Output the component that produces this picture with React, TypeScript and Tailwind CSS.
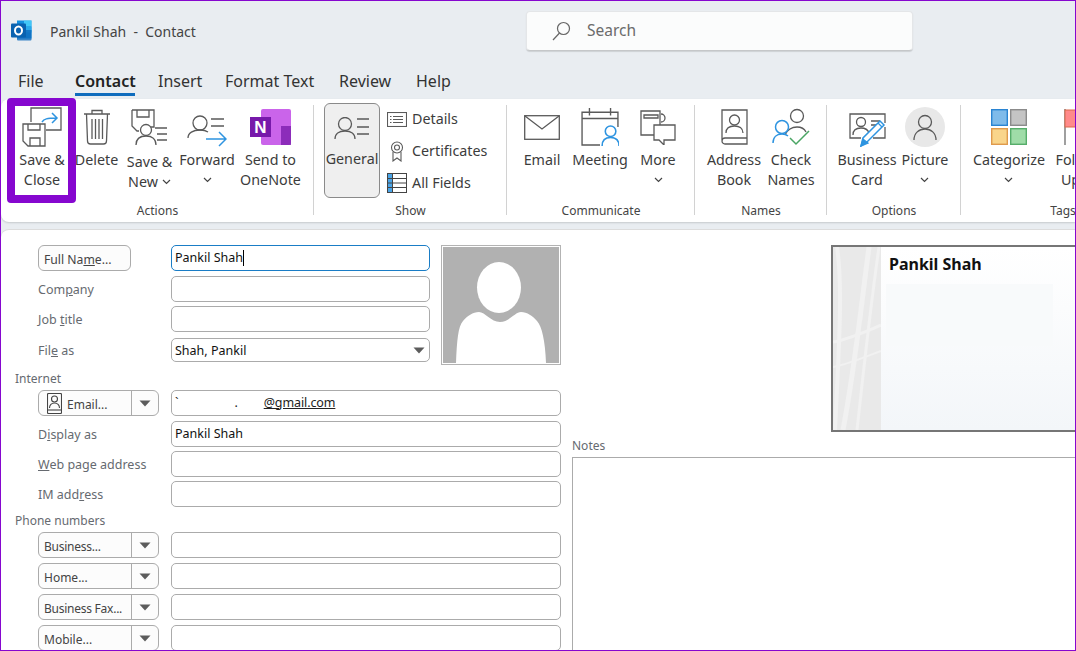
import React from "react";

const S = "#5a5a5a";
const B = "#2e94e0";

const Chev = ({ className = "" }: { className?: string }) => (
  <svg width="9" height="6" viewBox="0 0 9 6" className={className}>
    <path d="M1 1l3.5 3.5L8 1" fill="none" stroke="#444" strokeWidth="1.2" />
  </svg>
);

const Tri = () => (
  <svg width="12" height="7" viewBox="0 0 12 7"><path d="M0.5 0.5h11L6 6.5z" fill="#5c5c5c" /></svg>
);

const Logo = () => (
  <svg width="21" height="21" viewBox="0 0 21 21">
    <rect x="6" y="0.500" width="14.500" height="18" fill="#1490df" />
    <rect x="13" y="0.500" width="7.500" height="6" fill="#50d9ff" opacity="0.75" />
    <rect x="13" y="6.500" width="7.500" height="6" fill="#28a8ea" />
    <path d="M6 10h14.500v9.500a1 1 0 0 1-1 1H7a1 1 0 0 1-1-1z" fill="#0f6cbd" opacity="0.8" />
    <rect x="0" y="3.500" width="15" height="14" rx="1" fill="#0a62b0" />
    <ellipse cx="7.500" cy="10.500" rx="3.500" ry="4" fill="none" stroke="#fff" strokeWidth="2" />
  </svg>
);

const SaveClose = () => (
  <svg width="40" height="40" viewBox="0 0 40 40" fill="none" strokeWidth="1.3">
    <path d="M9 15V1h30v22H24" stroke={S} />
    <path d="M20 15c2-3 5-4 14-4M30 6l5 5-5 5" stroke={B} strokeWidth="1.5" />
    <path d="M1 17h22v22H6l-5-5z" stroke={S} fill="#fff" />
    <path d="M6 17v6h12v-6M8 39v-8h10v8" stroke={S} />
  </svg>
);

const Trash = () => (
  <svg width="28" height="36" viewBox="0 0 28 36" fill="none" stroke={S} strokeWidth="1.3">
    <path d="M1 5h26M9 5V1.500h10V5M3.500 5l1 27a3 3 0 0 0 3 3h13a3 3 0 0 0 3-3l1-27" />
    <path d="M9 10v20M12.500 10v20M16 10v20M19.500 10v20" />
  </svg>
);

const SaveNew = () => (
  <svg width="37" height="37" viewBox="0 0 37 37" fill="none" stroke={S} strokeWidth="1.3">
    <path d="M1 1h22v17h-5M1 1v16l5 5h2" />
    <path d="M6 1v7h12V1" />
    <circle cx="15" cy="21" r="5.500" fill="#fff" />
    <path d="M5 36c0-6 4-9 10-9s10 3 10 9" />
    <path d="M24 19h12M26 25h10M26 31h10" />
  </svg>
);

const Forward = () => (
  <svg width="40" height="33" viewBox="0 0 40 33" fill="none" strokeWidth="1.3" className="mt-[8px]">
    <g stroke={S}>
      <circle cx="13" cy="8" r="7" />
      <path d="M1 23c0-5 5-8 12-8 3 0 6 .6 8 2" />
      <path d="M24 4h13M24 11h13" />
    </g>
    <path d="M19 24h19M32 17l7 7-7 7" stroke={B} strokeWidth="1.5" />
  </svg>
);

const OneNote = () => (
  <svg width="41" height="37" viewBox="0 0 41 37">
    <rect x="11" y="0" width="30" height="36" rx="2" fill="#ca64ea" />
    <rect x="31" y="17" width="10" height="19" fill="#7719aa" opacity="0.75" />
    <rect x="0" y="8" width="21" height="20" fill="#7719aa" />
    <text x="10.500" y="24" textAnchor="middle" fontFamily="'Liberation Sans',sans-serif" fontWeight="700" fontSize="17" fill="#fff">N</text>
  </svg>
);

const General = () => (
  <svg width="36" height="22" viewBox="0 0 36 22" fill="none" stroke={S} strokeWidth="1.3">
    <circle cx="11" cy="7" r="6.500" />
    <path d="M1 22c0-5 4-8 10-8s10 3 10 8" />
    <path d="M23 2h12M23 10h12M23 17h12" />
  </svg>
);

const Details = () => (
  <svg width="20" height="15" viewBox="0 0 20 15" fill="none" stroke={S} strokeWidth="1.100">
    <rect x="0.500" y="0.500" width="19" height="14" />
    <path d="M3 4.500h1.500M6 4.500h10M3 7.500h1.500M6 7.500h10M3 10.500h1.500M6 10.500h10" />
  </svg>
);

const Cert = () => (
  <svg width="14" height="21" viewBox="0 0 14 21" fill="none" stroke={S} strokeWidth="1.100">
    <circle cx="7" cy="6.500" r="5.500" />
    <circle cx="7" cy="6.500" r="2.500" />
    <path d="M3 11v9l4-3 4 3v-9" />
  </svg>
);

const AllFields = () => (
  <svg width="20" height="20" viewBox="0 0 20 20">
    <rect x="0.500" y="0.500" width="19" height="19" fill="#fff" stroke="#444" />
    <rect x="1" y="1" width="4.500" height="18" fill="#4aa5e8" />
    <path d="M1 5.500h18M1 10h18M1 14.500h18M5.500 1v18" stroke="#444" fill="none" />
  </svg>
);

const Mail = () => (
  <svg width="36" height="25" viewBox="0 0 36 25" fill="none" stroke={S} strokeWidth="1.3">
    <rect x="0.700" y="0.700" width="34.600" height="23.600" />
    <path d="M1 1l17 13L35 1" />
  </svg>
);

const Meeting = () => (
  <svg width="38" height="38" viewBox="0 0 36 36" fill="none" strokeWidth="1.3">
    <g stroke={S}>
      <path d="M18 35H1V4h34v14M1 10h34M8 0v7M28 0v7" />
    </g>
    <circle cx="28" cy="22" r="5" stroke={B} fill="#fff" strokeWidth="1.500" />
    <path d="M20 36c0-5 3-8 8-8s8 3 8 8" stroke={B} strokeWidth="1.500" />
  </svg>
);

const More = () => (
  <svg width="36" height="35" viewBox="0 0 36 35" fill="none" stroke={S} strokeWidth="1.3">
    <path d="M14 25H1V1h19v14" />
    <path d="M4 5h14v3H4z" />
    <path d="M21 4a3 3 0 0 1 0 8" />
    <path d="M14 15h21v15h-11v5l-5-5h-5z" fill="#fff" />
  </svg>
);

const AddressBook = () => (
  <svg width="27" height="36" viewBox="0 0 27 36" fill="none" stroke={S} strokeWidth="1.3">
    <path d="M1 31V1h25v34H4a3 3 0 0 1-3-3 3 3 0 0 1 3-3h22" />
    <circle cx="13.500" cy="11" r="5" />
    <path d="M5 24c0-5 4-7 8.500-7S22 19 22 24" />
  </svg>
);

const CheckNames = () => (
  <svg width="38" height="38" viewBox="0 0 38 38" fill="none" strokeWidth="1.3">
    <g stroke={S}>
      <circle cx="25" cy="8" r="6.500" />
      <path d="M13 27c2-5 7-8 12-8 4 0 7 1 9 5" />
    </g>
    <circle cx="10" cy="19" r="6.500" stroke={B} fill="#fff" strokeWidth="1.500" />
    <path d="M1 35c0-6 4-9 9-9 3 0 5 1 6 2" stroke={B} strokeWidth="1.500" />
    <path d="M18 30l6 6 13-13" stroke="#4aa564" strokeWidth="1.500" />
  </svg>
);

const BizCard = () => (
  <svg width="38" height="34" viewBox="0 0 38 34" fill="none" strokeWidth="1.3" className="mt-[6px] ml-[2px]">
    <path d="M12 25H1V1h35v9M36 14v11H24" stroke={S} />
    <g stroke={S}>
      <circle cx="12" cy="9" r="4.500" />
      <path d="M4 22c0-5 3-7 8-7 4 0 7 2 8 5" />
      <path d="M22 8h9M22 12h5" />
    </g>
    <path d="M12 33l2-8L31 8l4 4-17 17z" stroke={B} fill="#fff" strokeWidth="1.500" />
    <path d="M12 33l2-7 5 4z" fill={B} stroke={B} />
    <path d="M29 10l4 4" stroke={B} />
  </svg>
);

const Picture = () => (
  <svg width="40" height="40" viewBox="0 0 40 40">
    <circle cx="20" cy="20" r="20" fill="#e8e8e8" />
    <g fill="none" stroke={S} strokeWidth="1.3">
      <circle cx="20" cy="15" r="6.500" />
      <path d="M9 33c0-7 5-11 11-11s11 4 11 11" />
    </g>
  </svg>
);

const Categorize = () => (
  <svg width="36" height="36" viewBox="0 0 36 36" strokeWidth="1.400">
    <rect x="0.700" y="0.700" width="15.600" height="15.600" fill="#7fbbea" stroke="#2a84d2" />
    <rect x="19.700" y="0.700" width="15.600" height="15.600" fill="#c4c4c4" stroke="#8b8b8b" />
    <rect x="0.700" y="19.700" width="15.600" height="15.600" fill="#f9d58b" stroke="#df9a4d" />
    <rect x="19.700" y="19.700" width="15.600" height="15.600" fill="#9fdca8" stroke="#56ad6a" />
  </svg>
);

const Flag = () => (
  <svg width="26" height="36" viewBox="0 0 26 36">
    <path d="M1 0v36" stroke="#777" strokeWidth="1.400" />
    <rect x="1" y="1" width="30" height="17" fill="#ff8a8a" stroke="#d9694a" />
  </svg>
);

const RB = ({ w, icon, lines, chev, low }: { w: number; icon: React.ReactNode; lines: React.ReactNode[]; chev?: "own" | "inline"; low?: boolean }) => (
  <div className="flex flex-col items-center shrink-0" style={{ width: w }}>
    <div className="h-[44px] flex items-center justify-center">{icon}</div>
    <div className={`flex flex-col items-center text-[14.300px] leading-[20px] text-[#3c3c3c] whitespace-nowrap ${low ? "mt-[3px]" : "mt-[1px]"}`}>
      {lines.map((l, i) => (
        <div key={i} className="flex items-center gap-[4px]">
          {l}
          {chev === "inline" && i === lines.length - 1 && <Chev />}
        </div>
      ))}
      {chev === "own" && <div className="h-[20px] flex items-center"><Chev /></div>}
    </div>
  </div>
);

const Group = ({ width, label, pl, children, last }: { width: number; label: string; pl: number; children: React.ReactNode; last?: boolean }) => (
  <div className="relative shrink-0 flex flex-col h-[116px] mt-[6px]" style={{ width }}>
    <div className="flex flex-1" style={{ paddingLeft: pl }}>{children}</div>
    <div className="text-[12px] leading-[16px] text-center text-[#444] mb-[2px]">{label}</div>
    {!last && <div className="absolute right-0 top-0 bottom-[6px] w-[1px] bg-[#d2d2d2]" />}
  </div>
);

const field = "h-[26px] border border-[#ababab] rounded-[5px] bg-white flex items-center px-[3px] text-[12.500px] text-[#111] shrink-0";

const Label = ({ children }: { children: React.ReactNode }) => (
  <div className="w-[133px] shrink-0 pt-[2px] text-[12.500px] text-[#666a70] whitespace-nowrap">{children}</div>
);

const SplitBtn = ({ children }: { children: React.ReactNode }) => (
  <div className="h-[26px] w-[121px] mr-[12px] shrink-0 border border-[#ababab] rounded-[6px] bg-[#fcfcfc] flex items-stretch text-[12px] text-[#444]">
    <div className="flex-1 flex items-center pl-[5px] border-r border-[#ababab] whitespace-nowrap overflow-hidden">{children}</div>
    <div className="w-[26px] flex items-center justify-center"><Tri /></div>
  </div>
);

const ContactIco = () => (
  <svg width="15" height="21" viewBox="0 0 15 21" className="ml-[3px] mr-[5px]" fill="none" stroke="#444" strokeWidth="1.100">
    <rect x="0.500" y="0.500" width="14" height="20" rx="1" />
    <path d="M0.500 17h14" />
    <circle cx="7.500" cy="6" r="3" />
    <path d="M2.500 15c0-3 2-5 5-5s5 2 5 5" />
  </svg>
);

const Photo = () => (
  <svg width="120" height="120" viewBox="0 0 120 120">
    <rect x="0.500" y="0.500" width="119" height="119" fill="#fff" stroke="#b3b3b3" />
    <rect x="2" y="2" width="116" height="116" fill="#b1b1b1" />
    <path d="M15 118C16 95 17 82 22 76C26 71 32 67 38 67C44 67 50 77 59 77C68 77 74 67 80 67C86 67 92 71 96 76C101 82 104 95 105 118Z" fill="#fff" />
    <ellipse cx="58" cy="42.500" rx="22" ry="25.500" fill="#fff" />
  </svg>
);

const Stripe = () => (
  <svg width="48" height="183" viewBox="0 0 48 183" className="shrink-0 block">
    <rect width="48" height="183" fill="#e9e9e9" />
    <g fill="none" stroke="#f1f1f1">
      <path d="M36 0C28 60 22 120 10 183" strokeWidth="5" />
      <path d="M46 0C36 70 30 130 24 183" strokeWidth="3" />
      <path d="M0 95c16-3 32-10 48-17" strokeWidth="3" />
      <path d="M0 120c16-3 32-10 48-16" strokeWidth="2" />
      <path d="M4 0C10 40 6 100 2 183" strokeWidth="4" />
    </g>
  </svg>
);

const Row = ({ mt, children }: { mt: string; children: React.ReactNode }) => (
  <div className={`flex items-center ${mt}`}>{children}</div>
);

const BtnText = ({ children, tight }: { children: React.ReactNode; tight?: boolean }) => (
  <span className={`pt-[4px] ${tight ? "tracking-[-0.25px]" : ""}`}>{children}</span>
);

export default function App() {
  return (
    <div className="w-[1076px] h-[651px] overflow-hidden border border-[#8607cf] bg-[#e9edf1] relative font-['Noto_Sans','Open_Sans',sans-serif] text-[#333]">
      {/* Title bar */}
      <div className="h-[60px] flex items-start relative">
        <div className="mt-[19px] ml-[10px]"><Logo /></div>
        <div className="mt-[21px] ml-[18px] text-[14px] leading-[20px] text-[#444] whitespace-pre">Pankil Shah  -  Contact</div>
        <div className="absolute left-[525px] top-[10px] w-[387px] h-[40px] bg-[#fbfcfc] rounded-[4px] border border-[#e4e6e8] border-b-[#c5c7c9] flex items-center shadow-[0_1px_1px_rgba(0,0,0,0.12)]">
          <svg width="19" height="20" viewBox="0 0 19 20" className="ml-[25px]" fill="none" stroke="#666" strokeWidth="1.200">
            <circle cx="11.500" cy="7.500" r="6" />
            <path d="M7.500 12L1 19" />
          </svg>
          <span className="ml-[16px] text-[15.500px] text-[#6b6b6b]">Search</span>
        </div>
      </div>
      {/* Tabs */}
      <div className="h-[38px] flex items-start text-[16px] leading-[40px] text-[#333] pl-[17px]">
        <div className="w-[57px]">File</div>
        <div className="w-[83px] font-semibold text-[#222] relative">
          Contact
          <div className="absolute left-0 top-[32px] w-[60px] h-[3px] bg-[#0f6cbd]" />
        </div>
        <div className="w-[67px]">Insert</div>
        <div className="w-[114px]">Format Text</div>
        <div className="w-[77px]">Review</div>
        <div>Help</div>
      </div>
      {/* Ribbon */}
      <div className="h-[123px] bg-white rounded-[8px] rounded-r-none flex shadow-[0_1px_2px_rgba(0,0,0,0.15)] overflow-hidden">
        <Group width={313} label="Actions" pl={7}>
          <RB w={68} icon={<SaveClose />} lines={["Save &", "Close"]} />
          <RB w={41} icon={<Trash />} lines={["Delete"]} />
          <RB w={65} icon={<SaveNew />} lines={["Save &", "New"]} chev="inline" low />
          <RB w={50} icon={<Forward />} lines={["Forward"]} chev="own" />
          <RB w={77} icon={<OneNote />} lines={["Send to", "OneNote"]} />
        </Group>
        <Group width={193} label="Show" pl={10}>
          <div className="w-[56px] h-[95px] mt-[-2px] shrink-0 rounded-[6px] border border-[#8a8a8a] bg-[#efefef] flex flex-col items-center">
            <div className="h-[45px] flex items-center pt-[2px]"><General /></div>
            <div className="text-[14.300px] leading-[20px] text-[#3c3c3c]">General</div>
          </div>
          <div className="ml-[7px] flex flex-col text-[14.300px] text-[#3c3c3c] mt-[-2px]">
            {[
              [<Details />, "Details"],
              [<Cert />, "Certificates"],
              [<AllFields />, "All Fields"],
            ].map(([ic, t], i) => (
              <div key={i} className="h-[32px] flex items-center">
                <div className="w-[20px] flex justify-center mr-[5px]">{ic}</div>
                {t}
              </div>
            ))}
          </div>
        </Group>
        <Group width={188} label="Communicate" pl={6}>
          <RB w={58} icon={<Mail />} lines={["Email"]} />
          <RB w={58} icon={<Meeting />} lines={["Meeting"]} />
          <RB w={58} icon={<More />} lines={["More"]} chev="own" />
        </Group>
        <Group width={132} label="Names" pl={10}>
          <RB w={58} icon={<AddressBook />} lines={["Address", "Book"]} />
          <RB w={56} icon={<CheckNames />} lines={["Check", "Names"]} />
        </Group>
        <Group width={134} label="Options" pl={11}>
          <RB w={58} icon={<BizCard />} lines={["Business", "Card"]} />
          <RB w={58} icon={<Picture />} lines={["Picture"]} chev="own" />
        </Group>
        <Group width={204} label="Tags" pl={7} last>
          <RB w={82} icon={<Categorize />} lines={["Categorize"]} chev="own" />
          <RB w={54} icon={<Flag />} lines={["Follow", "Up"]} chev="inline" />
        </Group>
      </div>
      {/* Form */}
      <div className="mt-[7px] bg-white rounded-tl-[8px] border-t border-[#dcdcdc] flex h-[430px] pt-[15px]">
        <div className="w-[560px] shrink-0 flex flex-col pl-[37px]">
          <div className="flex">
            <div className="w-[392px] shrink-0 flex flex-col">
              <div className="flex items-center">
                <div className="h-[26px] w-[93px] mr-[40px] shrink-0 border border-[#ababab] rounded-[6px] bg-[#fcfcfc] flex items-center pl-[5px] text-[12.200px] text-[#444]"><BtnText>Full Na<u>m</u>e...</BtnText></div>
                <div className={`${field} w-[259px] !border-[#1a7dc6]`}>Pankil Shah<span className="w-[1px] h-[16px] bg-black" /></div>
              </div>
              <Row mt="mt-[5px]"><Label>Com<u>p</u>any</Label><div className={`${field} w-[259px]`} /></Row>
              <Row mt="mt-[4px]"><Label>Job <u>t</u>itle</Label><div className={`${field} w-[259px]`} /></Row>
              <Row mt="mt-[6px]">
                <Label>Fil<u>e</u> as</Label>
                <div className={`${field} w-[259px] !h-[24px] justify-between`}><span className="pt-[2px]">Shah, Pankil</span><span className="mr-[1px]"><Tri /></span></div>
              </Row>
            </div>
            <div className="ml-[11px]"><Photo /></div>
          </div>
          <div className="ml-[-23px] mt-[6px] h-[16px] leading-[16px] text-[12px] text-[#666a70]">Internet</div>
          <Row mt="mt-[3px]">
            <SplitBtn><ContactIco /><BtnText>Email...</BtnText></SplitBtn>
            <div className={`${field} w-[390px] text-[#222] tracking-[-0.1px]`}><span>`</span><span className="ml-[56px]">.</span><u className="ml-[26px]">@gmail.com</u></div>
          </Row>
          <Row mt="mt-[5px]"><Label>D<u>i</u>splay as</Label><div className={`${field} w-[390px]`}>Pankil Shah</div></Row>
          <Row mt="mt-[4px]"><Label><u>W</u>eb page address</Label><div className={`${field} w-[390px]`} /></Row>
          <Row mt="mt-[4px]"><Label>IM add<u>r</u>ess</Label><div className={`${field} w-[390px]`} /></Row>
          <div className="ml-[-23px] mt-[6px] h-[16px] leading-[16px] text-[12px] text-[#666a70]">Phone numbers</div>
          <Row mt="mt-[3px]"><SplitBtn><BtnText tight>Business...</BtnText></SplitBtn><div className={`${field} w-[390px]`} /></Row>
          <Row mt="mt-[5px]"><SplitBtn><BtnText>Home...</BtnText></SplitBtn><div className={`${field} w-[390px]`} /></Row>
          <Row mt="mt-[5px]"><SplitBtn><BtnText tight>Business Fax...</BtnText></SplitBtn><div className={`${field} w-[390px]`} /></Row>
          <Row mt="mt-[5px]"><SplitBtn><BtnText>Mobile...</BtnText></SplitBtn><div className={`${field} w-[390px]`} /></Row>
        </div>
        <div className="flex-1 min-w-0 pl-[11px] flex flex-col">
          <div className="ml-[259px] h-[187px] border-2 border-r-0 border-[#767676] flex bg-gradient-to-b from-white to-[#f3f6f9] shrink-0">
            <Stripe />
            <div className="flex-1 relative pl-[8px] pt-[6px]">
              <div className="text-[16px] leading-[22px] font-bold text-[#111]">Pankil Shah</div>
              <div className="absolute left-[5px] top-[37px] w-[167px] h-[62px] bg-[#f8fafb]" />
            </div>
          </div>
          <div className="mt-[6px] text-[12px] leading-[16px] text-[#666a70]">Notes</div>
          <div className="mt-[3px] flex-1 border border-[#ababab] border-r-0" />
        </div>
      </div>
      {/* Annotation */}
      <div className="absolute left-[6px] top-[97px] w-[69px] h-[105px] border-[8px] border-[#8607cf] rounded-[4px]" />
    </div>
  );
}
